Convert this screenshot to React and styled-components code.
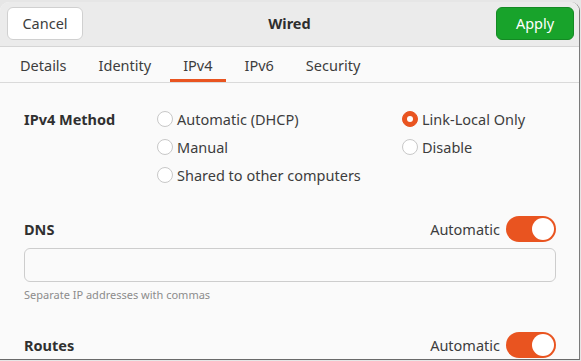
import React, { useState } from "react";
import styled, { createGlobalStyle } from "styled-components";

const GlobalStyle = createGlobalStyle`
  html, body {
    margin: 0;
    padding: 0;
    background: #e9e9e9;
  }
  body {
    font-family: "Noto Sans", "DejaVu Sans", sans-serif;
    color: #3d3d3d;
  }
`;

const Page = styled.div`
  width: 581px;
  height: 361px;
  overflow: hidden;
  padding-top: 2px;
  box-sizing: border-box;
  background: #e6e6e6;
`;

const Window = styled.div`
  width: 580px;
  height: 358px;
  box-sizing: border-box;
  display: flex;
  flex-direction: column;
  background: #fafafa;
  border-radius: 9px 9px 0 0;
  border-right: 1px solid #7a7a7a;
  border-bottom: 1px solid #6a6a6a;
  overflow: hidden;
`;

const HeaderBar = styled.header`
  height: 45px;
  flex-shrink: 0;
  box-sizing: border-box;
  display: flex;
  align-items: flex-start;
  justify-content: space-between;
  padding: 5px 5px 0 7px;
  background: #ebebeb;
  border-bottom: 1px solid #d5d5d5;
  position: relative;
`;

const Title = styled.div`
  position: absolute;
  left: 0;
  right: 0;
  top: 11px;
  line-height: 20px;
  text-align: center;
  font-weight: 700;
  font-size: 14.5px;
  color: #2e2e2e;
  pointer-events: none;
`;

const Button = styled.button`
  height: 33px;
  width: ${(p) => p.$w}px;
  border-radius: 6px;
  font-family: inherit;
  font-size: 14.5px;
  padding: 0 0 1px;
  background: ${(p) => (p.$primary ? "#18a32b" : "#ffffff")};
  color: ${(p) => (p.$primary ? "#ffffff" : "#3d3d3d")};
  border: 1px solid ${(p) => (p.$primary ? "#148a24" : "#d0d0d0")};
  position: relative;
  z-index: 1;
`;

const Tabs = styled.nav`
  height: 35px;
  flex-shrink: 0;
  display: flex;
  gap: 6px;
  padding-left: 7px;
  background: #fafafa;
  border-bottom: 1px solid #dadada;
`;

const Tab = styled.div`
  padding: 4px 13px 0;
  display: flex;
  align-items: center;
  font-size: 14.5px;
  color: #3d3d3d;
  border-bottom: 3px solid ${(p) => (p.$active ? "#e95420" : "transparent")};
  box-sizing: border-box;
`;

const Content = styled.main`
  padding: 26px 23px 0 24px;
  display: flex;
  flex-direction: column;
`;

const MethodSection = styled.section`
  display: flex;
`;

const SectionLabel = styled.div`
  font-weight: 700;
  font-size: 14.5px;
  line-height: 20px;
  color: #303030;
  width: ${(p) => p.$w || "auto"};
  flex-shrink: 0;
`;

const RadioGrid = styled.div`
  display: grid;
  grid-template-columns: 245px auto;
  row-gap: 8px;
`;

const RadioRow = styled.label`
  display: flex;
  align-items: center;
  gap: 4px;
  font-size: 14.5px;
  line-height: 20px;
  color: #3d3d3d;
  cursor: pointer;
`;

const RadioDot = styled.span`
  width: 16px;
  height: 16px;
  border-radius: 50%;
  box-sizing: border-box;
  display: flex;
  align-items: center;
  justify-content: center;
  background: ${(p) => (p.$on ? "#e95420" : "#ffffff")};
  border: 1px solid ${(p) => (p.$on ? "#e95420" : "#c8c8c8")};
  &::after {
    content: "";
    width: 6px;
    height: 6px;
    border-radius: 50%;
    background: #ffffff;
    display: ${(p) => (p.$on ? "block" : "none")};
  }
`;

const FieldHeader = styled.div`
  display: flex;
  align-items: center;
  justify-content: space-between;
  height: 26px;
  margin-top: ${(p) => p.$top}px;
`;

const SwitchGroup = styled.div`
  display: flex;
  align-items: center;
  gap: 6px;
  font-size: 14.5px;
  color: #3d3d3d;
`;

const Switch = styled.button`
  width: 50px;
  height: 26px;
  border-radius: 13px;
  border: none;
  padding: 2px;
  box-sizing: border-box;
  background: ${(p) => (p.$on ? "#e95420" : "#d6d6d6")};
  display: flex;
  justify-content: ${(p) => (p.$on ? "flex-end" : "flex-start")};
  cursor: pointer;
  &::after {
    content: "";
    width: 22px;
    height: 22px;
    border-radius: 50%;
    background: #ffffff;
  }
`;

const Entry = styled.input`
  margin-top: 6px;
  height: 34px;
  box-sizing: border-box;
  border: 1px solid #cdcdcd;
  border-radius: 6px;
  background: #fafafa;
  font-family: inherit;
  font-size: 14.5px;
  padding: 0 10px;
  outline: none;
`;

const Hint = styled.div`
  margin-top: 5px;
  font-size: 11px;
  line-height: 15px;
  color: #8c8c8c;
`;

const tabs = ["Details", "Identity", "IPv4", "IPv6", "Security"];
const methods = [
  ["Automatic (DHCP)", "Link-Local Only"],
  ["Manual", "Disable"],
  ["Shared to other computers", null],
];

export default function App() {
  const [method, setMethod] = useState("Link-Local Only");
  const [dnsAuto, setDnsAuto] = useState(true);
  const [routesAuto, setRoutesAuto] = useState(true);

  return (
    <>
      <GlobalStyle />
      <Page>
        <Window>
          <HeaderBar>
            <Button $w={76}>Cancel</Button>
            <Title>Wired</Title>
            <Button $w={78} $primary>
              Apply
            </Button>
          </HeaderBar>
          <Tabs>
            {tabs.map((t) => (
              <Tab key={t} $active={t === "IPv4"}>
                {t}
              </Tab>
            ))}
          </Tabs>
          <Content>
            <MethodSection>
              <SectionLabel $w="133px">IPv4 Method</SectionLabel>
              <RadioGrid>
                {methods.flat().map((m, i) =>
                  m ? (
                    <RadioRow key={m} onClick={() => setMethod(m)}>
                      <RadioDot $on={method === m} />
                      {m}
                    </RadioRow>
                  ) : (
                    <span key={"empty" + i} />
                  )
                )}
              </RadioGrid>
            </MethodSection>

            <FieldHeader $top={31}>
              <SectionLabel>DNS</SectionLabel>
              <SwitchGroup>
                Automatic
                <Switch $on={dnsAuto} onClick={() => setDnsAuto(!dnsAuto)} />
              </SwitchGroup>
            </FieldHeader>
            <Entry />
            <Hint>Separate IP addresses with commas</Hint>

            <FieldHeader $top={30}>
              <SectionLabel>Routes</SectionLabel>
              <SwitchGroup>
                Automatic
                <Switch
                  $on={routesAuto}
                  onClick={() => setRoutesAuto(!routesAuto)}
                />
              </SwitchGroup>
            </FieldHeader>
          </Content>
        </Window>
      </Page>
    </>
  );
}
